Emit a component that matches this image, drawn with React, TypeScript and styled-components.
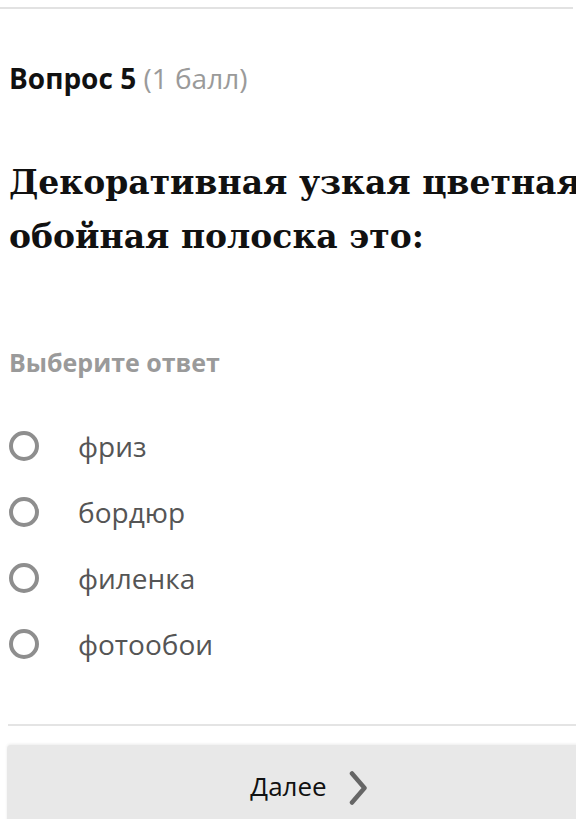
import React from "react";
import styled, { createGlobalStyle } from "styled-components";

const Global = createGlobalStyle`
  html, body { margin: 0; padding: 0; background: #fff; overflow: hidden; }
  body { font-family: "Open Sans", "Noto Sans", sans-serif; }
`;

const Page = styled.div`
  width: 576px;
  height: 819px;
  overflow: hidden;
  display: flex;
  flex-direction: column;
  padding-top: 7px;
  box-sizing: border-box;
  & > * { flex: none; }
`;

const TopRule = styled.div`
  height: 2px;
  width: 573px;
  background: #e2e2e2;
`;

const Content = styled.div`
  padding: 0 0 0 9px;
  display: flex;
  flex-direction: column;
`;

const QuestionLabel = styled.div`
  margin-top: 53px;
  font-size: 28px;
  line-height: 32px;
  color: #111;
  font-weight: 700;
`;

const Points = styled.span`
  font-weight: 400;
  color: #9a9a9a;
`;

const QuestionText = styled.h1`
  margin: 62px 0 0 0;
  width: 640px;
  font-family: "DejaVu Serif", "Liberation Serif", serif;
  font-weight: 700;
  font-size: 33px;
  line-height: 54px;
  color: #111;
`;

const Prompt = styled.div`
  margin-top: 83px;
  font-size: 25px;
  font-weight: 700;
  color: #9a9a9a;
  line-height: 30px;
`;

const Options = styled.div`
  margin-top: 36px;
  display: flex;
  flex-direction: column;
`;

const Option = styled.label`
  display: flex;
  align-items: center;
  height: 66px;
  gap: 39px;
`;

const Radio = styled.span`
  width: 30px;
  height: 30px;
  box-sizing: border-box;
  border-radius: 50%;
  border: 4px solid #8e8e8e;
  flex: none;
`;

const OptionText = styled.span`
  font-size: 28px;
  color: #555;
`;

const BottomRule = styled.div`
  margin: 47px 0 0 8px;
  height: 2px;
  background: #e4e4e4;
`;

const NextButton = styled.button`
  margin: 19px 0 0 7px;
  height: 90px;
  width: 604px;
  border: none;
  border-radius: 4px 0 0 0;
  background: #e8e8e8;
  box-shadow: 0 -1px 3px rgba(0, 0, 0, 0.08);
  display: flex;
  align-items: flex-start;
  justify-content: center;
  padding: 23px 0 0 0;
  gap: 22px;
  font-family: "Open Sans", "Noto Sans", sans-serif;
  font-size: 26px;
  color: #111;
`;

const Chevron = styled.svg`
  width: 19px;
  height: 36px;
  margin-top: 2px;
`;

const answers = ["фриз", "бордюр", "филенка", "фотообои"];

export default function App() {
  return (
    <>
      <Global />
      <Page>
        <TopRule />
        <Content>
          <QuestionLabel>
            Вопрос 5 <Points>(1 балл)</Points>
          </QuestionLabel>
          <QuestionText>Декоративная узкая цветная обойная полоска это:</QuestionText>
          <Prompt>Выберите ответ</Prompt>
          <Options>
            {answers.map((a) => (
              <Option key={a}>
                <Radio />
                <OptionText>{a}</OptionText>
              </Option>
            ))}
          </Options>
        </Content>
        <BottomRule />
        <NextButton>
          Далее
          <Chevron viewBox="0 0 19 36">
            <path d="M3 3.5 L15.5 18 L3 32.5" fill="none" stroke="#666" strokeWidth="4.5" strokeLinecap="round" strokeLinejoin="round" />
          </Chevron>
        </NextButton>
      </Page>
    </>
  );
}
